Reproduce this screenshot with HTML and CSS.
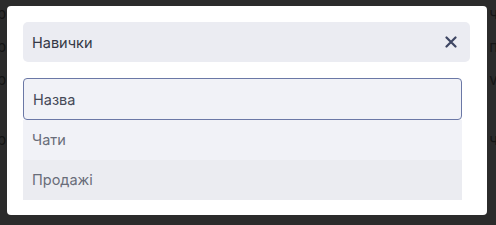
FILE: index.html
```html
<!DOCTYPE html>
<html>
  <head>
    <title>Навички</title>
    <link rel="stylesheet" href="styles.css">
  </head>
  <body>
    <div class="page">
      <div class="page-col left">
        <div class="page-row">р</div>
        <div class="page-row">р</div>
        <div class="page-row">р</div>
        <div class="page-row gap">р</div>
      </div>
      <div class="page-col right">
        <div class="page-row">ч</div>
        <div class="page-row">п</div>
        <div class="page-row">v</div>
        <div class="page-row gap">ч</div>
      </div>
    </div>

    <div class="modal">
      <div class="modal-header">
        <span class="modal-title">Навички</span>
        <button type="button" class="close-btn" aria-label="Закрити">
          <svg width="12" height="12" viewBox="0 0 12 12">
            <path d="M1.5 1.5 L10.5 10.5 M10.5 1.5 L1.5 10.5" stroke="#3e4663" stroke-width="2.2" stroke-linecap="round"/>
          </svg>
        </button>
      </div>
      <div class="select-box">
        <input type="text" class="search-input" placeholder="Назва">
        <ul class="options">
          <li class="option">Чати</li>
          <li class="option alt">Продажі</li>
        </ul>
      </div>
    </div>
  </body>
</html>
```

FILE: styles.css
```css
* {
  box-sizing: border-box;
  margin: 0;
  padding: 0;
}

body {
  background: #2b2b2b;
  font-family: Inter, "Noto Sans", sans-serif;
  width: 496px;
  height: 225px;
  overflow: hidden;
}

/* page behind the overlay */
.page {
  display: flex;
  justify-content: space-between;
  padding: 4px 0 0 0;
  color: #151515;
  font-size: 15px;
}

.page-col.left {
  margin-left: -3px;
}

.page-col.right {
  margin-right: -2px;
}

.page-row {
  height: 33px;
  line-height: 20px;
}

.page-row.gap {
  margin-top: 27px;
}

/* modal */
.modal {
  position: fixed;
  left: 7px;
  top: 6px;
  width: 480px;
  height: 209px;
  background: #fff;
  border-radius: 4px;
  padding: 16px 17px 15px 16px;
}

.modal-header {
  display: flex;
  align-items: center;
  justify-content: space-between;
  height: 40px;
  background: #ebecf2;
  border-radius: 5px;
  padding: 0 13px 0 9px;
}

.modal-title {
  font-size: 14.5px;
  color: #343846;
}

.close-btn {
  border: none;
  background: none;
  display: flex;
  align-items: center;
  cursor: pointer;
}

.select-box {
  margin-top: 16px;
  width: 439px;
}

.search-input {
  display: block;
  width: 100%;
  height: 42px;
  border: 1px solid #6b78a6;
  border-radius: 4px;
  background: #f1f2f7;
  padding: 0 9px;
  font-family: inherit;
  font-size: 14.5px;
  outline: none;
}

.search-input::placeholder {
  color: #454957;
}

.options {
  list-style: none;
}

.option {
  height: 40px;
  line-height: 40px;
  padding: 0 9px;
  font-size: 14.5px;
  color: #696d79;
  background: #f1f2f7;
}

.option.alt {
  background: #ebecf1;
}
```
